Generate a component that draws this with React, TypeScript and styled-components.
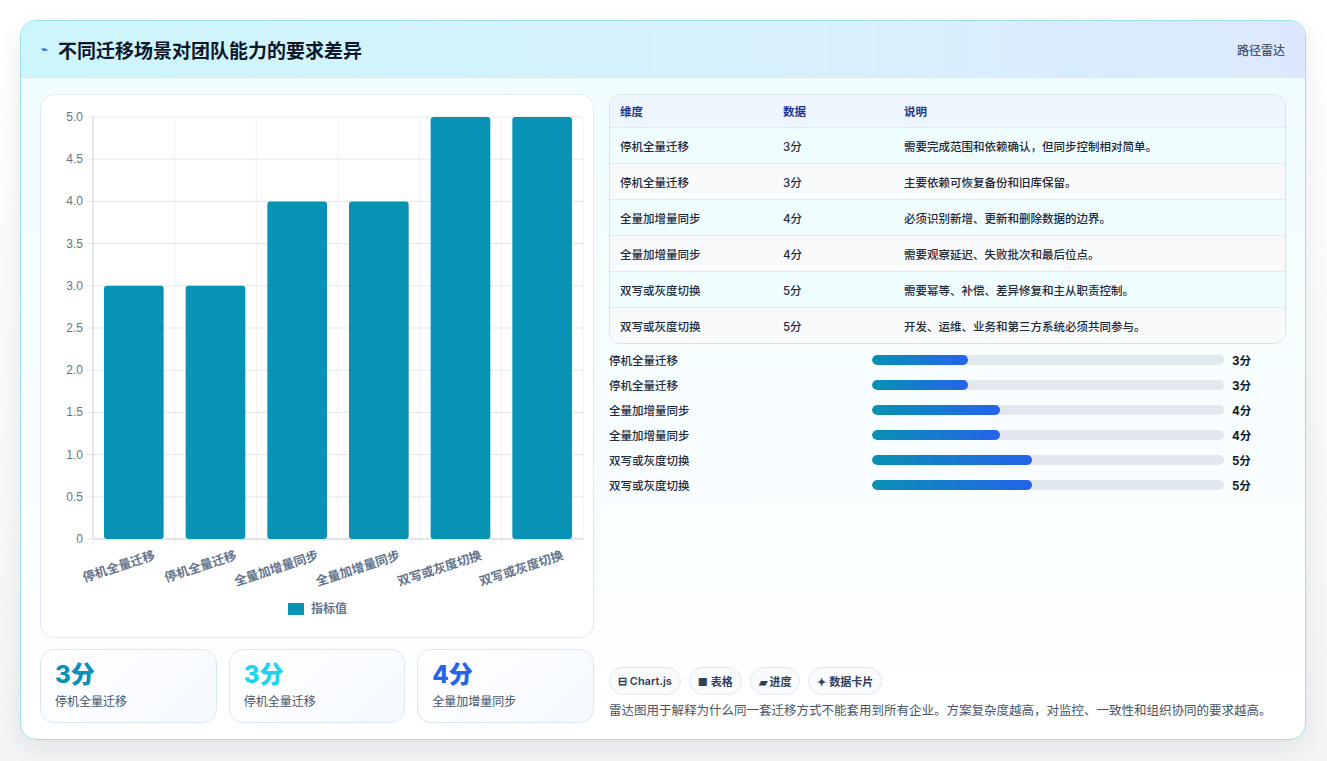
import React from 'react'
import styled, { createGlobalStyle } from 'styled-components'

const GlobalStyle = createGlobalStyle`
  html, body { margin: 0; padding: 0; background: #f3f4f6; }
  body { font-family: Inter, "Noto Sans CJK SC", sans-serif; }
`

const Page = styled.div`
  width: 1327px;
  height: 761px;
  padding: 20px;
  box-sizing: border-box;
  background: linear-gradient(#ffffff, #f3f4f6);
`

const Card = styled.div`
  height: 720px;
  width: 1286px;
  box-sizing: border-box;
  border: 1px solid #9fdfe9;
  border-radius: 16px;
  overflow: hidden;
  background: linear-gradient(180deg, #effdff, #f8fdff 60%, #ffffff);
  box-shadow: 0 8px 24px rgba(15, 23, 42, 0.08);
  display: flex;
  flex-direction: column;
`

const Header = styled.div`
  height: 56px;
  flex: none;
  display: flex;
  align-items: center;
  justify-content: space-between;
  padding: 0 20px;
  background: linear-gradient(90deg, #cdf5fc, #d6f1fd 60%, #dde8ff);
  border-bottom: 1px solid #c9eef5;
`

const Title = styled.h1`
  margin: 0;
  font-size: 19px;
  font-weight: 700;
  color: #0f172a;
  display: flex;
  align-items: center;
  gap: 10px;
`

const Bolt = styled.span`
  color: #2563eb;
  font-size: 11px;
`

const Tag = styled.span`
  font-size: 12px;
  color: #475569;
  font-weight: 500;
`

const Body = styled.div`
  flex: 1;
  display: grid;
  grid-template-columns: 554px 1fr;
  gap: 15px;
  padding: 16px 19px 18px 19px;
  min-height: 0;
`

const Column = styled.div`
  display: flex;
  flex-direction: column;
  gap: 11px;
  min-height: 0;
`

const ChartCard = styled.div`
  height: 544px;
  box-sizing: border-box;
  background: #ffffff;
  border: 1px solid #e2e8f0;
  border-radius: 14px;
  position: relative;
`

const Stats = styled.div`
  display: grid;
  grid-template-columns: repeat(3, 1fr);
  gap: 12px;
`

const Stat = styled.div`
  height: 74px;
  box-sizing: border-box;
  border: 1px solid #dbe7f3;
  border-radius: 14px;
  background: linear-gradient(135deg, #ffffff, #f5f9ff);
  padding: 10px 14px;
`

const StatValue = styled.div<{ $color: string }>`
  font-size: 24px;
  font-weight: 800;
  color: ${p => p.$color};
  line-height: 30px;
`

const StatLabel = styled.div`
  font-size: 12px;
  color: #475569;
  margin-top: 2px;
`

const Table = styled.div`
  border: 1px solid #d6e2ee;
  border-radius: 12px;
  overflow: hidden;
  background: #fff;
`

const Row = styled.div<{ $bg: string; $head?: boolean }>`
  display: grid;
  grid-template-columns: 163px 121px 1fr;
  height: ${p => (p.$head ? '32px' : '35px')};
  align-items: center;
  padding-left: 10px;
  background: ${p => p.$bg};
  border-top: ${p => (p.$head ? 'none' : '1px solid #e2e8f0')};
  font-size: 11.5px;
  font-weight: ${p => (p.$head ? 600 : 500)};
  color: ${p => (p.$head ? '#1e3a8a' : '#1e293b')};
`

const Bars = styled.div`
  display: flex;
  flex-direction: column;
  gap: 9px;
  margin-top: 8px;
`

const BarRow = styled.div`
  display: grid;
  grid-template-columns: 255px 352px 1fr;
  align-items: center;
  column-gap: 8px;
  font-size: 11.5px;
  font-weight: 500;
  color: #1e293b;
  height: 16px;
`

const Track = styled.div`
  height: 10px;
  border-radius: 5px;
  background: #e2e8f0;
  overflow: hidden;
`

const Fill = styled.div`
  height: 100%;
  border-radius: 5px;
  background: linear-gradient(90deg, #0891b2, #2563eb);
`

const Value = styled.span`
  font-weight: 700;
  color: #0f172a;
`

const Spacer = styled.div`
  flex: 1;
`

const Chips = styled.div`
  display: flex;
  gap: 8px;
`

const Chip = styled.span`
  height: 28px;
  box-sizing: border-box;
  padding: 0 8px;
  border: 1px solid #e2e8f0;
  border-radius: 14px;
  background: #f8fafc;
  display: flex;
  align-items: center;
  font-size: 11px;
  font-weight: 600;
  color: #334155;
`

const Note = styled.p`
  margin: 6px 0 0;
  font-size: 12.5px;
  line-height: 20px;
  color: #475569;
`

const data = [
  ['停机全量迁移', 3, '需要完成范围和依赖确认，但同步控制相对简单。'],
  ['停机全量迁移', 3, '主要依赖可恢复备份和旧库保留。'],
  ['全量加增量同步', 4, '必须识别新增、更新和删除数据的边界。'],
  ['全量加增量同步', 4, '需要观察延迟、失败批次和最后位点。'],
  ['双写或灰度切换', 5, '需要幂等、补偿、差异修复和主从职责控制。'],
  ['双写或灰度切换', 5, '开发、运维、业务和第三方系统必须共同参与。'],
] as const

const Chart = () => {
  const left = 52
  const right = 542
  const top = 22
  const bottom = 444
  const h = bottom - top
  const w = (right - left) / 6
  const ticks = [0, 0.5, 1, 1.5, 2, 2.5, 3, 3.5, 4, 4.5, 5]
  return (
    <svg width="554" height="544" style={{ display: 'block' }}>
      {ticks.map(t => {
        const y = bottom - (t / 5) * h
        return (
          <g key={t}>
            <line x1={left - 6} x2={right} y1={y} y2={y} stroke="#e5e7eb" />
            <text x={left - 10} y={y + 4} fontSize="12" fill="#6b7280" textAnchor="end" fontFamily="Liberation Sans, sans-serif">
              {t === 0 ? '0' : t.toFixed(1)}
            </text>
          </g>
        )
      })}
      {Array.from({ length: 7 }).map((_, i) => (
        <line key={i} x1={left + i * w} x2={left + i * w} y1={top} y2={bottom + 6} stroke="#edf0f3" />
      ))}
      <line x1={left} x2={left} y1={top} y2={bottom} stroke="#d1d5db" />
      <line x1={left} x2={right} y1={bottom} y2={bottom} stroke="#d1d5db" />
      {data.map(([label, v], i) => {
        const bh = (v / 5) * h
        const x = left + i * w + 11
        const cx = left + i * w + w / 2
        return (
          <g key={i}>
            <rect x={x} y={bottom - bh} width={w - 22} height={bh} rx="3" fill="#0892b4" />
            <text
              x={cx + 22}
              y={bottom + 20}
              fontSize="12.5"
              fontWeight="600"
              fill="#64748b"
              textAnchor="end"
              transform={`rotate(-18 ${cx + 22} ${bottom + 20})`}
              fontFamily="Noto Sans CJK SC, sans-serif"
            >
              {label}
            </text>
          </g>
        )
      })}
      <rect x="247" y="508" width="16" height="12" fill="#0892b4" />
      <text x="270" y="518" fontSize="12" fill="#64748b" fontWeight="600" fontFamily="Noto Sans CJK SC, sans-serif">指标值</text>
    </svg>
  )
}

export default function App() {
  return (
    <Page>
      <GlobalStyle />
      <Card>
        <Header>
          <Title>
            <Bolt>⌁</Bolt>不同迁移场景对团队能力的要求差异
          </Title>
          <Tag>路径雷达</Tag>
        </Header>
        <Body>
          <Column>
            <ChartCard>
              <Chart />
            </ChartCard>
            <Stats>
              <Stat>
                <StatValue $color="#0891b2">3分</StatValue>
                <StatLabel>停机全量迁移</StatLabel>
              </Stat>
              <Stat>
                <StatValue $color="#22d3ee">3分</StatValue>
                <StatLabel>停机全量迁移</StatLabel>
              </Stat>
              <Stat>
                <StatValue $color="#2563eb">4分</StatValue>
                <StatLabel>全量加增量同步</StatLabel>
              </Stat>
            </Stats>
          </Column>
          <Column style={{ gap: 0 }}>
            <Table>
              <Row $head $bg="#eef6ff">
                <span>维度</span>
                <span>数据</span>
                <span>说明</span>
              </Row>
              {data.map(([label, v, desc], i) => (
                <Row key={i} $bg={i % 2 === 0 ? '#f0fdff' : '#f8fafc'}>
                  <span>{label}</span>
                  <span>{v}分</span>
                  <span>{desc}</span>
                </Row>
              ))}
            </Table>
            <Bars>
              {data.map(([label, v], i) => (
                <BarRow key={i}>
                  <span>{label}</span>
                  <Track>
                    <Fill style={{ width: `${(v / 11) * 100}%` }} />
                  </Track>
                  <Value>{v}分</Value>
                </BarRow>
              ))}
            </Bars>
            <Spacer />
            <Chips>
              <Chip>⊟ Chart.js</Chip>
              <Chip>■ 表格</Chip>
              <Chip>▰ 进度</Chip>
              <Chip>✦ 数据卡片</Chip>
            </Chips>
            <Note>雷达图用于解释为什么同一套迁移方式不能套用到所有企业。方案复杂度越高，对监控、一致性和组织协同的要求越高。</Note>
          </Column>
        </Body>
      </Card>
    </Page>
  )
}
